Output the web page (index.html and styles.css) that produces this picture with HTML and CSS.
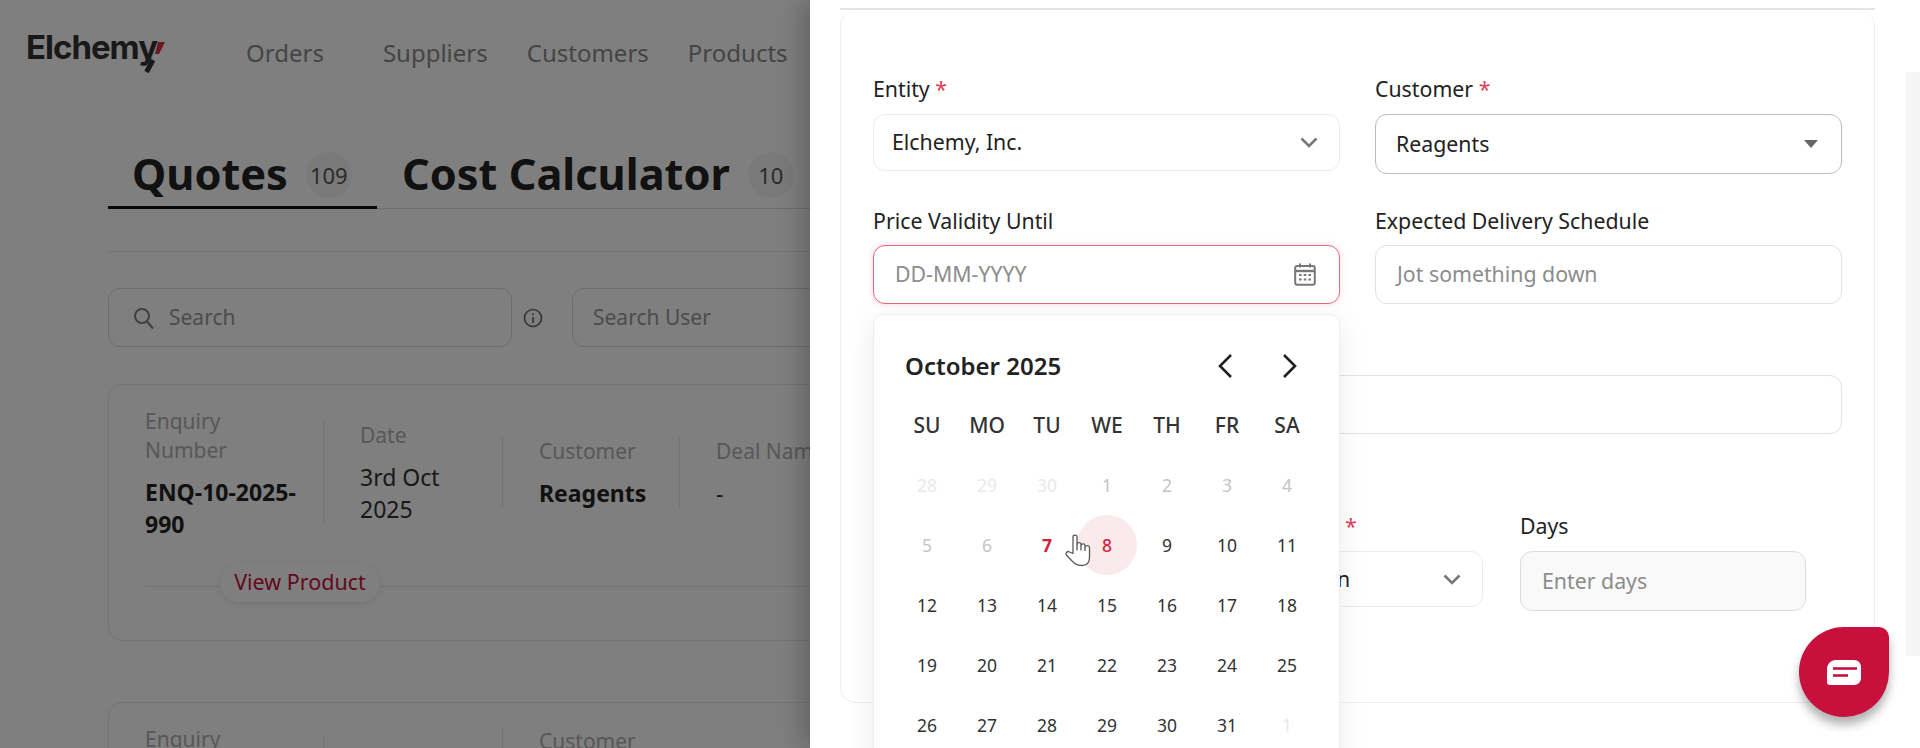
FILE: index.html
```html
<!DOCTYPE html>
<html lang="en">
<head>
  <meta charset="UTF-8" />
  <title>Elchemy Quotes</title>
  <link rel="stylesheet" href="styles.css">
</head>
<body>

  <!-- Page behind the drawer -->
  <div class="page">
    <header class="topbar">
      <div class="logo">Elchemy<svg class="logo-mark" width="26" height="36" viewBox="0 0 26 36" fill="none"><path d="M12 22L5.500 34" stroke="#333" stroke-width="5"/><path d="M17 4h7L18 16h-4z" fill="#e0283c"/></svg></div>
      <nav class="nav">
        <a class="nav-first">Orders</a>
        <a>Suppliers</a>
        <a>Customers</a>
        <a>Products</a>
      </nav>
    </header>

    <main class="content">
      <div class="tabs">
        <div class="tab tab-active">Quotes <span class="badge">109</span></div>
        <div class="tab">Cost Calculator <span class="badge">10</span></div>
      </div>
      <div class="rule"></div>

      <div class="filters">
        <div class="search-box">
          <svg width="22" height="24" viewBox="0 0 22 24" fill="none" stroke="#808080" stroke-width="2"><circle cx="9" cy="10" r="7"/><path d="M14 15.500l6 7"/></svg>
          <span>Search</span>
        </div>
        <svg class="info-icon" width="20" height="20" viewBox="0 0 20 20" fill="none" stroke="#666" stroke-width="1.600"><circle cx="10" cy="10" r="8.500"/><path d="M10 9v6M10 5.200v1.800"/></svg>
        <div class="user-box">Search User</div>
      </div>

      <section class="quote-card">
        <div class="quote-cols">
          <div class="col col-first">
            <div class="col-label">Enquiry<br>Number</div>
            <div class="col-value strong">ENQ-10-2025-<br>990</div>
          </div>
          <div class="col col-date">
            <div class="col-label">Date</div>
            <div class="col-value">3rd Oct<br>2025</div>
          </div>
          <div class="col col-customer">
            <div class="col-label">Customer</div>
            <div class="col-value strong">Reagents</div>
          </div>
          <div class="col col-deal">
            <div class="col-label">Deal Name</div>
            <div class="col-value">-</div>
          </div>
        </div>
        <div class="quote-foot">
          <span class="view-product">View Product</span>
        </div>
      </section>

      <section class="quote-card quote-card-next">
        <div class="quote-cols">
          <div class="col col-first">
            <div class="col-label">Enquiry</div>
          </div>
          <div class="col col-date col-blank"></div>
          <div class="col col-customer col-tall">
            <div class="col-label">Customer</div>
          </div>
        </div>
      </section>
    </main>
  </div>

  <div class="overlay"></div>

  <!-- Quote drawer -->
  <aside class="drawer">
    <div class="drawer-edge"></div>
    <div class="form-card">
      <div class="form-grid">
        <div class="field">
          <label>Entity <i>*</i></label>
          <div class="control control-soft">
            <span>Elchemy, Inc.</span>
            <svg width="18" height="11" viewBox="0 0 18 11" fill="none" stroke="#777" stroke-width="2.600"><path d="M1.500 1.500L9 9l7.500-7.500"/></svg>
          </div>
        </div>
        <div class="field">
          <label>Customer <i>*</i></label>
          <div class="control control-outlined">
            <span>Reagents</span>
            <svg width="14" height="8" viewBox="0 0 14 8"><path d="M0 0h14L7 8z" fill="#666"/></svg>
          </div>
        </div>
        <div class="field date-field">
          <label class="label-low">Price Validity Until</label>
          <div class="control control-focus">
            <span class="placeholder">DD-MM-YYYY</span>
            <svg width="22" height="23" viewBox="0 0 22 23" fill="none"><rect x="1.200" y="3" width="19.600" height="18.800" rx="2" stroke="#777" stroke-width="2"/><path d="M1 8h20" stroke="#777" stroke-width="2.400"/><path d="M6 .5v4M16 .5v4" stroke="#777" stroke-width="2"/><path d="M5 12h2.600M9.700 12h2.600M14.400 12h2.600M5 16.500h2.600M9.700 16.500h2.600M14.400 16.500h2.600" stroke="#777" stroke-width="2.200"/></svg>
          </div>

          <div class="date-popup">
            <div class="date-head">
              <span class="date-title">October 2025</span>
              <div class="date-nav">
                <svg width="60" height="26" viewBox="0 0 60 26" fill="none" stroke="#222" stroke-width="2.600"><path d="M35 2L24 13l11 11"/></svg>
                <svg width="60" height="26" viewBox="0 0 60 26" fill="none" stroke="#222" stroke-width="2.600"><path d="M28 2l11 11-11 11"/></svg>
              </div>
            </div>
            <div class="date-grid">
              <b>SU</b><b>MO</b><b>TU</b><b>WE</b><b>TH</b><b>FR</b><b>SA</b>
              <span class="faint">28</span><span class="faint">29</span><span class="faint">30</span><span class="off">1</span><span class="off">2</span><span class="off">3</span><span class="off">4</span>
              <span class="off">5</span><span class="off">6</span><span class="today">7</span><span class="hovered">8</span><span>9</span><span>10</span><span>11</span>
              <span>12</span><span>13</span><span>14</span><span>15</span><span>16</span><span>17</span><span>18</span>
              <span>19</span><span>20</span><span>21</span><span>22</span><span>23</span><span>24</span><span>25</span>
              <span>26</span><span>27</span><span>28</span><span>29</span><span>30</span><span>31</span><span class="faint">1</span>
            </div>
            <!-- mouse pointer -->
            <svg class="hand" width="26" height="33" viewBox="-.5 -.5 26 33" fill="#fff" stroke="#5a5a5a" stroke-width="1.300" stroke-linejoin="round"><path d="M7.500 19V2.500c0-2.400 4-2.400 4 0V10c.5-2.500 4-2.500 4 0v1c.5-2.200 4-2.200 4 0v1.500c1-2 4.500-1.700 4.500.5v10c0 5-3 8-8 8-5 0-7-2-10-5L1 20.500c-1.500-2 1-4.500 3-3z"/><path d="M11.500 10v6M15.500 11v5M19.500 12.500v4" fill="none"/></svg>
          </div>
        </div>
        <div class="field">
          <label class="label-low">Expected Delivery Schedule</label>
          <div class="control control-plain">
            <span class="placeholder">Jot something down</span>
          </div>
        </div>
        <div class="field field-wide">
          <label></label>
          <div class="control control-plain"></div>
        </div>
      </div>

      <div class="terms-grid">
        <div class="field"></div>
        <div class="field">
          <label class="label-term"><i>*</i></label>
          <div class="control control-soft control-term">
            <span>n</span>
            <svg width="18" height="11" viewBox="0 0 18 11" fill="none" stroke="#777" stroke-width="2.600"><path d="M1.500 1.500L9 9l7.500-7.500"/></svg>
          </div>
        </div>
        <div class="field">
          <label>Days</label>
          <div class="control control-filled">
            <span class="placeholder">Enter days</span>
          </div>
        </div>
      </div>
    </div>
  </aside>

  <div class="scroll-thumb"></div>

  <button class="chat-btn" aria-label="Chat">
    <svg width="34" height="25" viewBox="0 0 34 25"><path d="M9 0h18c4 0 7 3 7 7v11c0 4-3 7-7 7H3c-2 0-3-1-3-3V9c0-5 4-9 9-9z" fill="#fff"/><path d="M6 8.500h24" stroke="#c8103c" stroke-width="2.600"/><path d="M6 15.500h15" stroke="#c8103c" stroke-width="2.600"/></svg>
  </button>

</body>
</html>
```

FILE: styles.css
```css
* {
  box-sizing: border-box;
  margin: 0;
  padding: 0;
}

html, body {
  height: 748px;
  overflow: hidden;
}

body {
  position: relative;
  background: #fff;
  font-family: "Noto Sans", sans-serif;
  color: #222;
}

/* page behind the drawer */
.topbar {
  display: flex;
  align-items: flex-start;
  height: 150px;
  padding: 24px 0 0 26px;
}

.logo {
  position: relative;
  width: 220px;
  font-family: "Inter", sans-serif;
  font-size: 33px;
  font-weight: 700;
  letter-spacing: -1px;
  line-height: 46px;
  color: #333;
}

.logo-mark {
  position: absolute;
  left: 115px;
  top: 14px;
}

.nav {
  display: flex;
  gap: 39px;
  font-size: 24px;
  line-height: 58px;
  color: #8a8a8a;
}

.nav-first {
  margin-right: 20px;
}

.content {
  padding-left: 108px;
  width: 1500px;
}

.tabs {
  display: flex;
  border-bottom: 1px solid #dcdcdc;
  height: 59px;
}

.tab {
  display: flex;
  align-items: flex-start;
  gap: 18px;
  padding-left: 25px;
  font-size: 43.300px;
  font-weight: 700;
  line-height: 48px;
  color: #222;
}

.tab-active {
  width: 269px;
  height: 59px;
  padding-left: 24px;
  border-bottom: 3px solid #111;
}

.badge {
  display: flex;
  align-items: center;
  justify-content: center;
  width: 46px;
  height: 46px;
  margin-top: 2px;
  border-radius: 50%;
  background: #f5f5f5;
  font-size: 22px;
  font-weight: 400;
  color: #555;
}

.rule {
  margin-top: 42px;
  border-top: 1px solid #e8e8e8;
}

.filters {
  display: flex;
  align-items: center;
  margin-top: 36px;
}

.search-box, .user-box {
  display: flex;
  align-items: center;
  height: 59px;
  border: 1px solid #d8d8d8;
  border-radius: 12px;
  font-size: 21px;
  color: #999;
}

.search-box {
  width: 404px;
  gap: 14px;
  padding-left: 24px;
}

.search-box span {
  margin-bottom: 2px;
}

.info-icon {
  margin: 0 29px 0 11px;
}

.user-box {
  width: 400px;
  padding: 0 0 2px 20px;
}

.quote-card {
  position: relative;
  margin-top: 37px;
  height: 257px;
  padding: 21px 36px 0;
  border: 1px solid #e8e8e8;
  border-radius: 14px;
  background: #fff;
}

.quote-card-next {
  margin-top: 61px;
  height: 260px;
}

.quote-cols {
  display: flex;
  align-items: center;
  height: 134px;
}

.col {
  flex: none;
}

.col-first {
  width: 178px;
  align-self: flex-start;
  margin-top: 1px;
}

.col-date, .col-customer, .col-deal {
  border-left: 1px solid #e8e8e8;
  padding-left: 36px;
}

.col-date {
  width: 179px;
}

.col-customer {
  width: 177px;
}

.col-deal {
  width: 180px;
}

.col-blank {
  height: 110px;
}

.col-tall {
  height: 128px;
}

.col-label {
  font-size: 21px;
  line-height: 29px;
  color: #b0b0b0;
  margin-bottom: 11px;
}

.col-value {
  font-size: 23px;
  line-height: 32px;
  color: #333;
}

.strong {
  font-weight: 700;
  color: #222;
}

.quote-foot {
  position: relative;
  margin-top: 46px;
  border-top: 1px solid #e8e8e8;
}

.view-product {
  position: absolute;
  left: 75px;
  top: -23px;
  display: block;
  width: 160px;
  height: 38px;
  border-radius: 19px;
  background: #fff;
  box-shadow: 0 2px 8px rgba(0,0,0,0.1);
  font-size: 21.500px;
  line-height: 36px;
  text-align: center;
  color: #c8103c;
}

.overlay {
  position: absolute;
  inset: 0;
  background: rgba(0,0,0,0.5);
}

/* drawer */
.drawer {
  position: absolute;
  top: 0;
  right: 0;
  bottom: 0;
  width: 1110px;
  padding: 0 45px 0 30px;
  overflow: hidden;
  background: #fff;
  box-shadow: -8px 0 24px rgba(0,0,0,0.22);
}

.drawer-edge {
  height: 10px;
  border-bottom: 2px solid #e4e4e4;
}

.form-card {
  height: 693px;
  padding: 65px 32px 0;
  border: 1px solid #efefef;
  border-top: none;
  border-radius: 16px;
}

.form-grid {
  display: grid;
  grid-template-columns: 467px 467px;
  gap: 32px 35px;
}

.field {
  position: relative;
}

.field-wide {
  grid-column: 1 / 3;
}

.field label {
  display: block;
  height: 27px;
  margin-bottom: 12px;
  font-size: 21.300px;
  line-height: 27px;
  color: #222;
}

.field .label-low {
  line-height: 29px;
}

.field label i {
  font-style: normal;
  color: #e0405a;
}

.control {
  display: flex;
  align-items: center;
  justify-content: space-between;
  height: 59px;
  padding: 0 21px;
  border: 1px solid #e6e6e6;
  border-radius: 12px;
  font-size: 21.300px;
  background: #fff;
}

.control span {
  margin-bottom: 2px;
}

.placeholder {
  color: #8c8c8c;
}

.control-soft {
  height: 57px;
  padding: 0 21px 0 18px;
  border-color: #ebebeb;
}

.control-outlined {
  height: 60px;
  padding: 0 23px 0 20px;
  border-color: #bcbcbc;
}

.control-focus {
  padding-right: 23px;
  border: 1.500px solid #e8697f;
  box-shadow: 0 0 6px rgba(232,105,127,0.25);
}

.control-plain {
  border-color: #e2e2e2;
  padding-left: 21px;
}

.control-filled {
  height: 60px;
  background: #f9f9f9;
  border-color: #dcdcdc;
}

.control-term {
  height: 56px;
  padding-left: 139px;
}

.label-term {
  padding-left: 148px;
}

/* date picker popup */
.date-popup {
  position: absolute;
  top: 108px;
  left: 0;
  right: 0;
  z-index: 2;
  height: 470px;
  padding: 30px 23px 0;
  border: 1px solid #eeeeee;
  border-radius: 10px;
  background: #fff;
  box-shadow: 0 6px 30px rgba(0,0,0,0.08);
}

.date-head {
  display: flex;
  align-items: center;
  justify-content: space-between;
  height: 40px;
  margin-bottom: 10px;
  padding-left: 8px;
}

.date-title {
  font-size: 24px;
  font-weight: 600;
  color: #222;
}

.date-nav {
  display: flex;
  margin-top: 2px;
}

.date-grid {
  display: grid;
  grid-template-columns: repeat(7, 60px);
  grid-auto-rows: 60px;
  align-items: center;
  justify-items: center;
  font-size: 17.500px;
  color: #333;
}

.date-grid b {
  font-size: 21px;
  font-weight: 500;
  color: #333;
}

.date-grid span {
  display: flex;
  align-items: center;
  justify-content: center;
  width: 60px;
  height: 60px;
  border-radius: 50%;
}

.date-grid .faint {
  color: #e9e9e9;
}

.date-grid .off {
  color: #c4c4c4;
}

.date-grid .today {
  font-weight: 700;
  color: #d6203f;
}

.date-grid .hovered {
  background: #fbeaec;
  font-weight: 500;
  color: #d6203f;
}

.hand {
  position: absolute;
  left: 191px;
  top: 219px;
}

.terms-grid {
  display: grid;
  grid-template-columns: repeat(3, 286px);
  gap: 37px;
  margin: 78px 0 0 1px;
}

/* floating bits */
.scroll-thumb {
  position: absolute;
  top: 72px;
  right: 0;
  width: 14px;
  height: 584px;
  background: #f5f5f5;
}

.chat-btn {
  position: absolute;
  left: 1799px;
  top: 627px;
  display: flex;
  align-items: center;
  justify-content: center;
  width: 90px;
  height: 90px;
  border: none;
  border-radius: 50% 10px 50% 50%;
  background: #c8103c;
  box-shadow: 0 8px 10px rgba(0,0,0,0.3);
}
```
